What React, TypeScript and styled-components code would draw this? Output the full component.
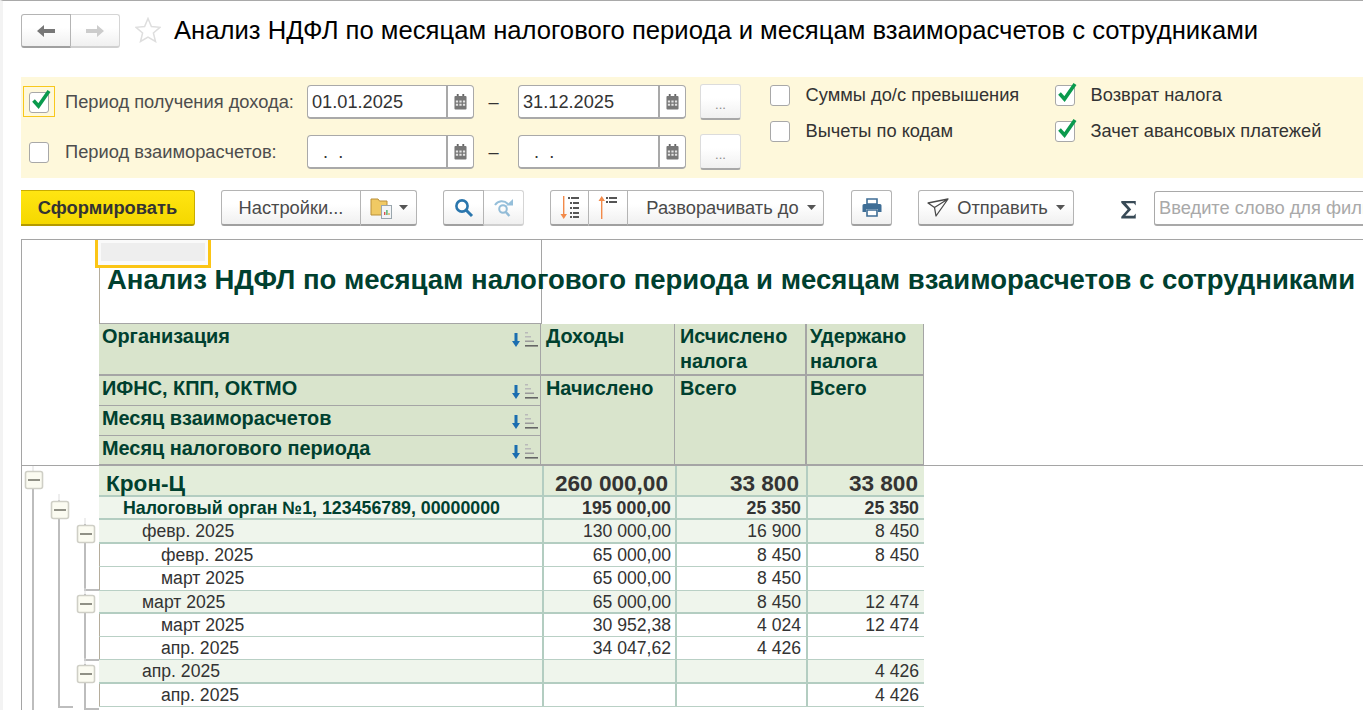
import React from 'react';
import styled, { createGlobalStyle } from 'styled-components';

const GlobalStyle = createGlobalStyle`
  html, body {
    margin: 0;
    padding: 0;
    background: #fff;
    font-family: 'Liberation Sans', Arial, sans-serif;
  }
`;

const Page = styled.div`
  box-sizing: border-box;
  width: 1363px;
  height: 710px;
  overflow: hidden;
  background: #fff;
  border-top: 1px solid #a9a9a9;
  border-left: 3px solid #f3f3f3;
  padding-left: 18px;
`;

const Header = styled.div`
  display: flex;
  align-items: flex-start;
  height: 76px;
  padding-top: 13px;
  box-sizing: border-box;
`;

const ButtonGroup = styled.div`
  display: flex;
  flex: none;
  height: 35px;
`;

const ToolButton = styled.div<{ $w: number; $dim?: boolean; $shift?: number; $gap?: number }>`
  box-sizing: border-box;
  flex: none;
  width: ${(p) => p.$w}px;
  height: 100%;
  display: flex;
  align-items: center;
  justify-content: center;
  gap: ${(p) => p.$gap ?? 6}px;
  padding-left: ${(p) => p.$shift ?? 0}px;
  color: #4a4a4a;
  font-size: 18.3px;
  white-space: nowrap;
  background: linear-gradient(#fff 40%, #f0f0f0);
  border: 1px solid ${(p) => (p.$dim ? '#d5d5d5' : '#b4b4b4')};
  border-bottom: 2px solid ${(p) => (p.$dim ? '#d0d0d0' : '#a0a0a0')};
  border-left-width: 0;
  &:first-child {
    border-left-width: 1px;
    border-radius: 3px 0 0 3px;
  }
  &:last-child {
    border-radius: 0 3px 3px 0;
  }
  &:only-child {
    border-radius: 3px;
  }
`;

const NavButtons = styled(ButtonGroup)`
  height: 34px;
`;

const Star = styled.svg`
  flex: none;
  margin: 3px 13px 0 15px;
`;

const PageTitle = styled.h1`
  margin: 1px 0 0;
  font-size: 25.65px;
  font-weight: 400;
  line-height: 30px;
  color: #000;
  white-space: nowrap;
`;

const Filter = styled.div`
  box-sizing: border-box;
  height: 101px;
  background: #fef8db;
  display: flex;
  padding-top: 7px;
`;

const Periods = styled.div`
  width: 749px;
  display: flex;
  flex-direction: column;
  gap: 14px;
`;

const PeriodRow = styled.div`
  display: flex;
  align-items: center;
  height: 36px;
`;

const PeriodLabel = styled.div`
  box-sizing: border-box;
  width: 286px;
  display: flex;
  align-items: center;
  padding-left: 8px;
  gap: 16px;
  font-size: 18.3px;
  color: #4d4d4d;
  white-space: nowrap;
  position: relative;
`;

const FocusRing = styled.span`
  position: absolute;
  left: 2px;
  top: -5px;
  width: 32px;
  height: 31px;
  box-sizing: border-box;
  border: 1px solid #f8c81c;
`;

const CheckBox = styled.span`
  box-sizing: border-box;
  position: relative;
  flex: none;
  display: block;
  width: 20px;
  height: 21px;
  background: #fff;
  border: 1px solid #a8a8a8;
  border-radius: 3px;
`;

const CheckMark = styled.svg`
  position: absolute;
  left: 0;
  top: -5px;
`;

const DateField = styled.div<{ $w: number }>`
  box-sizing: border-box;
  width: ${(p) => p.$w}px;
  height: 34px;
  display: flex;
  background: #fff;
  border: 1px solid #a9a9a9;
  border-bottom-width: 2px;
  border-radius: 4px;
  font-size: 18.2px;
  color: #333;
`;

const DateText = styled.div<{ $empty?: boolean }>`
  flex: 1;
  padding-left: ${(p) => (p.$empty ? 15 : 4)}px;
  line-height: 33px;
  white-space: pre;
`;

const CalendarButton = styled.div`
  box-sizing: border-box;
  width: 27px;
  border-left: 2px solid #a9a9a9;
  display: flex;
  align-items: center;
  justify-content: center;
`;

const Dash = styled.div`
  box-sizing: border-box;
  width: 44px;
  padding-right: 5px;
  text-align: center;
  font-size: 18.2px;
  color: #333;
`;

const MoreButton = styled.div`
  box-sizing: border-box;
  width: 41px;
  height: 36px;
  margin-left: 14px;
  display: flex;
  align-items: center;
  justify-content: center;
  padding-top: 6px;
  font-size: 13px;
  color: #8a8a8a;
  background: linear-gradient(#fff 40%, #f0f0f0);
  border: 1px solid #dcdcdc;
  border-bottom: 2px solid #a8a8a8;
  border-radius: 3px;
`;

const Options = styled.div<{ $w: number }>`
  width: ${(p) => p.$w}px;
  display: flex;
  flex-direction: column;
  gap: 15px;
  padding-top: 1px;
`;

const Option = styled.div`
  display: flex;
  align-items: flex-start;
  gap: 15.5px;
  height: 21px;
  font-size: 18.3px;
  line-height: 19px;
  color: #333;
  white-space: nowrap;
`;

const Toolbar = styled.div`
  display: flex;
  align-items: flex-start;
  height: 61px;
  padding-top: 12px;
  box-sizing: border-box;
`;

const GenerateButton = styled.div`
  box-sizing: border-box;
  flex: none;
  width: 174px;
  height: 36px;
  display: flex;
  align-items: center;
  justify-content: center;
  font-size: 18.3px;
  font-weight: 700;
  color: #333;
  background: linear-gradient(#ffe512, #f5d800);
  border: 1px solid #c9ad00;
  border-bottom: 2px solid #b49a00;
  border-left: 0;
  border-radius: 0 3px 3px 0;
`;

const ToolGroup = styled(ButtonGroup)<{ $gap: number }>`
  margin-left: ${(p) => p.$gap}px;
  height: 36px;
`;

const Sigma = styled.svg`
  flex: none;
  margin: 10px 0 0 46px;
`;

const SearchBox = styled.div`
  box-sizing: border-box;
  flex: none;
  width: 230px;
  height: 35px;
  margin: 1px 0 0 17px;
  padding-left: 4px;
  line-height: 32px;
  font-size: 18.3px;
  color: #a9a9a9;
  white-space: nowrap;
  background: #fff;
  border: 1px solid #a9a9a9;
  border-bottom-width: 2px;
  border-radius: 3px;
`;

const Report = styled.div`
  position: relative;
  border-top: 1px solid #a5a5a5;
  border-left: 1px solid #a5a5a5;
`;

const ActiveCell = styled.div`
  position: absolute;
  left: 73px;
  top: 0;
  width: 116px;
  height: 28px;
  box-sizing: border-box;
  border: 3px solid #fbc515;
  border-top: 0;
  background: #fafafa;
  padding: 3px 3px 4px;
  &::after {
    content: '';
    display: block;
    height: 100%;
    background: #eee;
  }
`;

const TitleBand = styled.div`
  margin-left: 77px;
  height: 84px;
  width: 443px;
  box-sizing: border-box;
  border-right: 1px solid #a5a5a5;
  border-bottom: 1px solid #a5a5a5;
  display: flex;
  align-items: flex-end;
  background: linear-gradient(#b5ad9c, #b5ad9c) left bottom / 1px 56px no-repeat;
`;

const ReportTitle = styled.div`
  font-size: 27.5px;
  font-weight: 700;
  color: #00402f;
  white-space: nowrap;
  padding: 0 0 27px 8px;
  line-height: 32px;
`;

const HeadArea = styled.div`
  padding-left: 77px;
  border-bottom: 1px solid #a5a5a5;
`;

const HeadGrid = styled.div`
  display: grid;
  width: 825px;
  height: 141px;
  grid-template-columns: 442px 134px 132px 117px;
  grid-template-rows: 52px 30px 30px 29px;
  background: #d9e4cc;
  color: #00402f;
  font-weight: 700;
  font-size: 19.9px;
  line-height: 25px;
`;

const HeadCell = styled.div<{ $span?: number; $thick?: boolean; $pad?: number }>`
  box-sizing: border-box;
  display: flex;
  justify-content: space-between;
  grid-row: span ${(p) => p.$span ?? 1};
  padding: 0 1px 0 ${(p) => p.$pad ?? 5}px;
  border-right: ${(p) => (p.$thick ? 2 : 1)}px solid #a5a5a5;
  border-bottom: 1px solid #a5a5a5;
  white-space: nowrap;
`;

const GroupCell = styled(HeadCell)`
  padding-left: 3px;
`;

const TopHeadCell = styled(HeadCell)`
  border-bottom-width: 2px;
`;

const TopGroupCell = styled(GroupCell)`
  border-bottom-width: 2px;
`;

const SortIcon = styled.svg`
  flex: none;
  margin-top: 7px;
`;

const Body = styled.div`
  display: flex;
`;

const Tree = styled.svg`
  flex: none;
  display: block;
`;

const Rows = styled.div`
  width: 825px;
  flex: none;
`;

type Level = 'org' | 'tax' | 'month' | 'leaf';

const levelBg: Record<Level, string> = {
  org: '#e3edda',
  tax: '#eff5ec',
  month: '#eff5ec',
  leaf: '#fff',
};

const levelIndent: Record<Level, number> = { org: 6, tax: 23, month: 42, leaf: 61 };

const levelFont: Record<Level, number> = { org: 22.6, tax: 17.8, month: 17.6, leaf: 17.6 };

const RowLine = styled.div<{ $level: Level; $h: number }>`
  box-sizing: border-box;
  display: grid;
  grid-template-columns: 443px 133px 131px 118px;
  height: ${(p) => p.$h}px;
  background: ${(p) => levelBg[p.$level]};
  border-bottom: ${(p) => (p.$level === 'leaf' ? '1px solid #b9d0c5' : '2px solid #b3cdc1')};
  font-size: ${(p) => levelFont[p.$level]}px;
  font-weight: ${(p) => (p.$level === 'org' || p.$level === 'tax' ? 700 : 400)};
  color: #333;
  line-height: ${(p) => (p.$level === 'org' ? 35 : p.$h - 1)}px;
`;

const NameCell = styled.div<{ $level: Level }>`
  padding-left: ${(p) => levelIndent[p.$level]}px;
  color: ${(p) => (p.$level === 'org' || p.$level === 'tax' ? '#00402f' : '#333')};
  border-left: 1px solid ${(p) => (p.$level === 'leaf' ? '#b5ad9c' : 'transparent')};
  white-space: nowrap;
`;

const NumCell = styled.div<{ $big?: boolean }>`
  text-align: right;
  padding-right: ${(p) => (p.$big ? 7 : 5)}px;
  border-left: 2px solid #b3cdc1;
  white-space: nowrap;
  &:nth-child(2) {
    padding-right: ${(p) => (p.$big ? 7 : 4)}px;
  }
  &:nth-child(4) {
    padding-right: ${(p) => (p.$big ? 6 : 5)}px;
  }
`;

const BackArrow = ({ color }: { color: string }) => (
  <svg width="20" height="14" viewBox="0 0 20 14">
    <path d="M1 7 8 1v4h11v4H8v4z" fill={color} />
  </svg>
);

const ForwardArrow = ({ color }: { color: string }) => (
  <svg width="20" height="14" viewBox="0 0 20 14">
    <path d="M19 7 12 1v4H1v4h11v4z" fill={color} />
  </svg>
);

const Calendar = () => (
  <svg width="13" height="16" viewBox="0 0 14 17">
    <path d="M3 0h2v3H3zM9 0h2v3H9z" fill="#666" />
    <rect x="0.5" y="2" width="13" height="14.5" rx="1" fill="#777" />
    <path
      d="M2 7h2.400v2H2zM5.800 7h2.400v2H5.800zM9.600 7H12v2H9.600zM2 10.500h2.400v2H2zM5.800 10.500h2.400v2H5.800zM9.600 10.500H12v2H9.600z"
      fill="#e4e4e4"
    />
  </svg>
);

const Tick = () => (
  <CheckMark width="22" height="23" viewBox="0 0 22 23">
    <path d="M3.500 12.500 8.500 18 19 3" fill="none" stroke="#0a9a4d" strokeWidth="3.600" />
  </CheckMark>
);

const Check = ({ on }: { on?: boolean }) => <CheckBox>{on && <Tick />}</CheckBox>;

const Caret = () => (
  <svg width="9" height="5" viewBox="0 0 9 5">
    <path d="M0 0h9L4.500 5z" fill="#555" />
  </svg>
);

const HeadSort = () => (
  <SortIcon width="28" height="17" viewBox="0 0 28 17">
    <path d="M3.500 2h3v8h2.500L5 16 1 10h2.500z" fill="#1b6eb0" />
    <path d="M14 1h3v1.500h-3zM14 5h6v1.500h-6z" fill="#b9b9b9" />
    <path d="M14 9.500h9V11h-9z" fill="#9a9a9a" />
    <path d="M14 14h13v1.600H14z" fill="#666" />
  </SortIcon>
);

const FolderIcon = () => (
  <svg width="23" height="24" viewBox="0 0 23 24">
    <path d="M1 3h7l1.500 2H17v14H1z" fill="#f0c964" stroke="#b98f38" />
    <rect x="11.500" y="9.500" width="10" height="13" fill="#f2f5f7" stroke="#9aa6ad" />
    <path d="M14 19v-3h1.400v3z" fill="#d9534f" />
    <path d="M16.200 19v-5h1.400v5z" fill="#4caf6a" />
    <path d="M18.400 19v-2h1.200v2z" fill="#d9a441" />
  </svg>
);

const SearchIcon = () => (
  <svg width="20" height="20" viewBox="0 0 20 20">
    <circle cx="8" cy="8" r="5.600" fill="none" stroke="#2a76ad" strokeWidth="2.600" />
    <path d="M12 12l6 6" stroke="#2a76ad" strokeWidth="3" />
  </svg>
);

const SearchAgainIcon = () => (
  <svg width="20" height="20" viewBox="0 0 20 20" opacity="0.55">
    <circle cx="9" cy="11" r="3.800" fill="none" stroke="#3f8bbd" strokeWidth="2" />
    <path d="M11.800 14l3.600 4" stroke="#3f8bbd" strokeWidth="2.400" />
    <path d="M1 7c3-4.500 9-5 13-1" fill="none" stroke="#3f8bbd" strokeWidth="2" />
    <path d="M19 1v6.500h-7z" fill="#3f8bbd" />
  </svg>
);

const SortDownIcon = () => (
  <svg width="22" height="24" viewBox="0 0 22 24">
    <path d="M4 0h1.400v18H8l-3.300 5-3.200-5H4z" fill="#f28a4a" />
    <path
      d="M9 1h2v2H9zM12 1h8v2h-8zM11 6h2v2h-2zM14 6h6v2h-6zM11 11h2v2h-2zM14 11h6v2h-6zM11 16h2v2h-2zM14 16h6v2h-6zM11 20h2v2h-2zM14 20h6v2h-6z"
      fill="#555"
    />
  </svg>
);

const SortUpIcon = () => (
  <svg width="22" height="24" viewBox="0 0 22 24">
    <path d="M4 23h1.400V5H8L4.700 0 1.500 5H4z" fill="#f28a4a" />
    <path d="M9 1h2v2H9zM12 1h8v2h-8zM9 5h2v2H9zM12 5h8v2h-8z" fill="#555" />
  </svg>
);

const PrintIcon = () => (
  <svg width="20" height="19" viewBox="0 0 20 19">
    <path d="M5 1h10v5H5z" fill="#fff" stroke="#3f6e96" strokeWidth="1.600" />
    <path d="M2 6h16a1.500 1.500 0 0 1 1.500 1.500V14H16v-3H4v3H.500V7.500A1.500 1.500 0 0 1 2 6z" fill="#3f6e96" />
    <path d="M5 12h10v6H5z" fill="#fff" stroke="#3f6e96" strokeWidth="1.600" />
  </svg>
);

const PlaneIcon = () => (
  <svg width="22" height="20" viewBox="0 0 22 20">
    <path d="M1 5 21 1 9 18 7.500 9.500zM7.500 9.500 21 1" fill="none" stroke="#4a4a4a" strokeWidth="1.300" strokeLinejoin="round" />
  </svg>
);

const TreeBox = ({ x, y }: { x: number; y: number }) => (
  <g>
    <rect x={x + 0.5} y={y + 0.5} width="17" height="17" rx="2" fill="#fbfbf1" stroke="#cfcfc6" strokeWidth="1.600" />
    <path d={`M${x + 3} ${y + 9}h12`} stroke="#77776c" strokeWidth="1.600" />
  </g>
);

const TreeGutter = () => (
  <Tree width="77" height="245" viewBox="0 0 77 245">
    <g fill="none" stroke="#bdbdbd" strokeWidth="2">
      <path d="M11 5v240" />
      <path d="M37 34v207h14" />
      <path d="M63 58v66h14M63 128v66h14M63 198v45h14" />
      <path d="M11 0v5M37 28v7M63 52v6M63 122v6M63 192v6" strokeWidth="1" stroke="#ddd" />
    </g>
    <TreeBox x={3} y={5} />
    <TreeBox x={29} y={35} />
    <TreeBox x={55} y={59} />
    <TreeBox x={55} y={129} />
    <TreeBox x={55} y={199} />
  </Tree>
);

const rows: { level: Level; h: number; name: string; income: string; calc: string; held: string }[] = [
  { level: 'org', h: 31, name: 'Крон-Ц', income: '260 000,00', calc: '33 800', held: '33 800' },
  { level: 'tax', h: 23, name: 'Налоговый орган №1, 123456789, 00000000', income: '195 000,00', calc: '25 350', held: '25 350' },
  { level: 'month', h: 24, name: 'февр. 2025', income: '130 000,00', calc: '16 900', held: '8 450' },
  { level: 'leaf', h: 23, name: 'февр. 2025', income: '65 000,00', calc: '8 450', held: '8 450' },
  { level: 'leaf', h: 24, name: 'март 2025', income: '65 000,00', calc: '8 450', held: '' },
  { level: 'month', h: 23, name: 'март 2025', income: '65 000,00', calc: '8 450', held: '12 474' },
  { level: 'leaf', h: 23, name: 'март 2025', income: '30 952,38', calc: '4 024', held: '12 474' },
  { level: 'leaf', h: 23, name: 'апр. 2025', income: '34 047,62', calc: '4 426', held: '' },
  { level: 'month', h: 24, name: 'апр. 2025', income: '', calc: '', held: '4 426' },
  { level: 'leaf', h: 23, name: 'апр. 2025', income: '', calc: '', held: '4 426' },
];

const App: React.FC = () => {
  return (
    <>
      <GlobalStyle />
      <Page>
        <Header>
          <NavButtons>
            <ToolButton $w={50}>
              <BackArrow color="#777" />
            </ToolButton>
            <ToolButton $w={49} $dim>
              <ForwardArrow color="#ccc" />
            </ToolButton>
          </NavButtons>
          <Star width="26" height="26" viewBox="0 0 26 26">
            <path
              d="M13 1.500 16.400 9.600 25 10.300 18.400 16 20.500 24.500 13 20 5.500 24.500 7.600 16 1 10.300 9.600 9.600z"
              fill="none"
              stroke="#dedede"
              strokeWidth="1.500"
            />
          </Star>
          <PageTitle>Анализ НДФЛ по месяцам налогового периода и месяцам взаиморасчетов с сотрудниками</PageTitle>
        </Header>

        <Filter>
          <Periods>
            <PeriodRow>
              <PeriodLabel>
                <FocusRing />
                <Check on />
                Период получения дохода:
              </PeriodLabel>
              <DateField $w={167}>
                <DateText>01.01.2025</DateText>
                <CalendarButton>
                  <Calendar />
                </CalendarButton>
              </DateField>
              <Dash>–</Dash>
              <DateField $w={168}>
                <DateText>31.12.2025</DateText>
                <CalendarButton>
                  <Calendar />
                </CalendarButton>
              </DateField>
              <MoreButton>...</MoreButton>
            </PeriodRow>
            <PeriodRow>
              <PeriodLabel>
                <Check />
                Период взаиморасчетов:
              </PeriodLabel>
              <DateField $w={167}>
                <DateText $empty>{'.  .'}</DateText>
                <CalendarButton>
                  <Calendar />
                </CalendarButton>
              </DateField>
              <Dash>–</Dash>
              <DateField $w={168}>
                <DateText $empty>{'.  .'}</DateText>
                <CalendarButton>
                  <Calendar />
                </CalendarButton>
              </DateField>
              <MoreButton>...</MoreButton>
            </PeriodRow>
          </Periods>
          <Options $w={285}>
            <Option>
              <Check />
              Суммы до/с превышения
            </Option>
            <Option>
              <Check />
              Вычеты по кодам
            </Option>
          </Options>
          <Options $w={300}>
            <Option>
              <Check on />
              Возврат налога
            </Option>
            <Option>
              <Check on />
              Зачет авансовых платежей
            </Option>
          </Options>
        </Filter>

        <Toolbar>
          <GenerateButton>Сформировать</GenerateButton>
          <ToolGroup $gap={26}>
            <ToolButton $w={140}>Настройки...</ToolButton>
            <ToolButton $w={56}>
              <FolderIcon />
              <Caret />
            </ToolButton>
          </ToolGroup>
          <ToolGroup $gap={26}>
            <ToolButton $w={41}>
              <SearchIcon />
            </ToolButton>
            <ToolButton $w={40} $dim>
              <SearchAgainIcon />
            </ToolButton>
          </ToolGroup>
          <ToolGroup $gap={26}>
            <ToolButton $w={39}>
              <SortDownIcon />
            </ToolButton>
            <ToolButton $w={39}>
              <SortUpIcon />
            </ToolButton>
            <ToolButton $w={196} $shift={11} $gap={8}>
              Разворачивать до
              <Caret />
            </ToolButton>
          </ToolGroup>
          <ToolGroup $gap={27}>
            <ToolButton $w={41}>
              <PrintIcon />
            </ToolButton>
          </ToolGroup>
          <ToolGroup $gap={26}>
            <ToolButton $w={156} $gap={8}>
              <PlaneIcon />
              Отправить
              <Caret />
            </ToolButton>
          </ToolGroup>
          <Sigma width="17" height="19" viewBox="0 0 18 21">
            <path d="M1 1h16v5l-2-2.500H6l6 7-6.500 7H15l2-2.500v5.500H1v-2l7-8L1 3z" fill="#384a56" />
          </Sigma>
          <SearchBox>Введите слово для фильтрации</SearchBox>
        </Toolbar>

        <Report>
          <ActiveCell />
          <TitleBand>
            <ReportTitle>Анализ НДФЛ по месяцам налогового периода и месяцам взаиморасчетов с сотрудниками</ReportTitle>
          </TitleBand>
          <HeadArea>
            <HeadGrid>
              <TopGroupCell>
                Организация
                <HeadSort />
              </TopGroupCell>
              <TopHeadCell>Доходы</TopHeadCell>
              <TopHeadCell $thick>
                <span>
                  Исчислено
                  <br />
                  налога
                </span>
              </TopHeadCell>
              <TopHeadCell $pad={3}>
                <span>
                  Удержано
                  <br />
                  налога
                </span>
              </TopHeadCell>
              <GroupCell>
                ИФНС, КПП, ОКТМО
                <HeadSort />
              </GroupCell>
              <HeadCell $span={3}>Начислено</HeadCell>
              <HeadCell $span={3} $thick>
                Всего
              </HeadCell>
              <HeadCell $span={3} $pad={3}>
                Всего
              </HeadCell>
              <GroupCell>
                Месяц взаиморасчетов
                <HeadSort />
              </GroupCell>
              <GroupCell>
                Месяц налогового периода
                <HeadSort />
              </GroupCell>
            </HeadGrid>
          </HeadArea>
          <Body>
            <TreeGutter />
            <Rows>
              {rows.map((r, i) => (
                <RowLine key={i} $level={r.level} $h={r.h}>
                  <NameCell $level={r.level}>{r.name}</NameCell>
                  <NumCell $big={r.level === 'org'}>{r.income}</NumCell>
                  <NumCell $big={r.level === 'org'}>{r.calc}</NumCell>
                  <NumCell $big={r.level === 'org'}>{r.held}</NumCell>
                </RowLine>
              ))}
            </Rows>
          </Body>
        </Report>
      </Page>
    </>
  );
};

export default App;
